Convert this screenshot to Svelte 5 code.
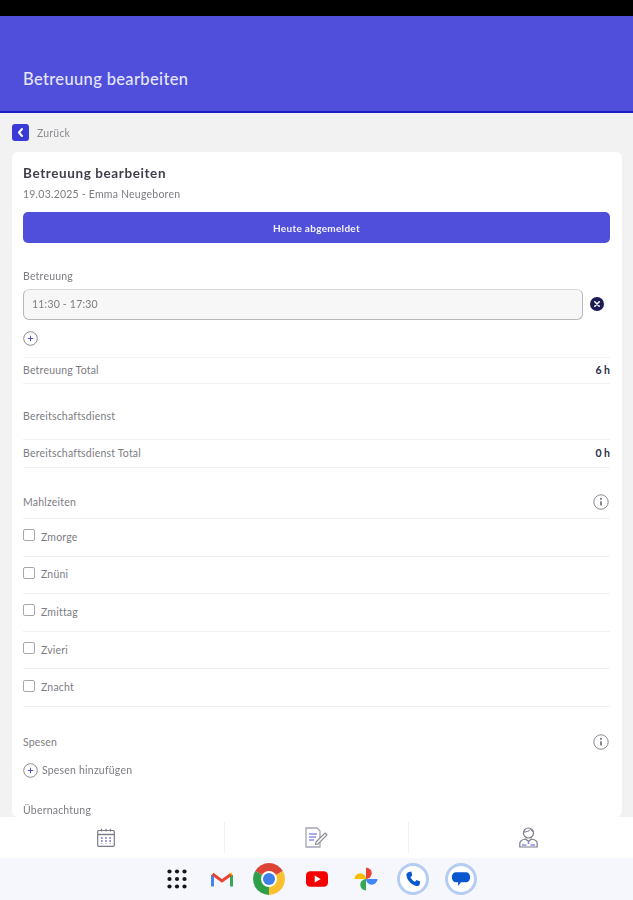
<script>
  const meals = ['Zmorge', 'Znüni', 'Zmittag', 'Zvieri', 'Znacht'];
</script>

<div class="page">
  <div class="statusbar"></div>
  <header class="appbar"><h1>Betreuung bearbeiten</h1></header>

  <main class="content">
    <div class="back">
      <span class="backicon">
        <svg width="17" height="17" viewBox="0 0 17 17"><path d="M10 5 L7 8.5 L10 12" fill="none" stroke="#fff" stroke-width="2" stroke-linecap="round" stroke-linejoin="round"/></svg>
      </span>
      <span>Zurück</span>
    </div>

    <section class="card">
      <h2>Betreuung bearbeiten</h2>
      <p class="sub">19.03.2025 - Emma Neugeboren</p>
      <button class="primary">Heute abgemeldet</button>

      <div class="label first">Betreuung</div>
      <div class="inputrow">
        <div class="input">11:30 - 17:30</div>
        <svg class="remove" width="14" height="14" viewBox="0 0 14 14"><circle cx="7" cy="7" r="7" fill="#1b1b56"/><path d="M4.8 4.8 L9.2 9.2 M9.2 4.8 L4.8 9.2" stroke="#fff" stroke-width="1.6" stroke-linecap="round"/></svg>
      </div>
      <div class="addonly">
        <svg width="15" height="15" viewBox="0 0 15 15"><circle cx="7.5" cy="7.5" r="6.8" fill="none" stroke="#8a8a94" stroke-width="1"/><path d="M7.5 4.8 V10.2 M4.8 7.5 H10.2" stroke="#4f4fdb" stroke-width="1"/></svg>
      </div>

      <div class="total"><span>Betreuung Total</span><b>6 h</b></div>

      <div class="label standby">Bereitschaftsdienst</div>
      <div class="total tall"><span>Bereitschaftsdienst Total</span><b>0 h</b></div>

      <div class="heading meals-head">
        <span>Mahlzeiten</span>
        <svg width="16" height="16" viewBox="0 0 16 16"><circle cx="8" cy="8" r="7.2" fill="none" stroke="#8a8a90" stroke-width="1"/><path d="M8 7.2 V11.5" stroke="#55555c" stroke-width="1.4"/><circle cx="8" cy="4.9" r="0.9" fill="#55555c"/></svg>
      </div>
      {#each meals as meal}
        <label class="meal"><span class="box"></span><span>{meal}</span></label>
      {/each}

      <div class="heading spesen">
        <span>Spesen</span>
        <svg width="16" height="16" viewBox="0 0 16 16"><circle cx="8" cy="8" r="7.2" fill="none" stroke="#8a8a90" stroke-width="1"/><path d="M8 7.2 V11.5" stroke="#55555c" stroke-width="1.4"/><circle cx="8" cy="4.9" r="0.9" fill="#55555c"/></svg>
      </div>
      <div class="addrow">
        <svg width="15" height="15" viewBox="0 0 15 15"><circle cx="7.5" cy="7.5" r="6.8" fill="none" stroke="#8a8a94" stroke-width="1"/><path d="M7.5 4.8 V10.2 M4.8 7.5 H10.2" stroke="#4f4fdb" stroke-width="1"/></svg>
        <span>Spesen hinzufügen</span>
      </div>
      <div class="label overnight">Übernachtung</div>
    </section>
  </main>

  <nav class="tabs">
    <div class="tab">
      <svg width="18" height="19" viewBox="0 0 18 19" fill="none"><rect x="0.7" y="2.5" width="16.6" height="15.8" rx="1" stroke="#7a7a8a" stroke-width="1.2"/><path d="M0.7 6.5 H17.3" stroke="#7a7a8a" stroke-width="1.4"/><path d="M4.5 0.8 V3.5 M9 0.8 V3.5 M13.5 0.8 V3.5" stroke="#7a7a8a" stroke-width="1.2"/><path d="M4.8 9 V15.5 M9 9 V15.5 M13.2 9 V15.5" stroke="#8a8ae6" stroke-width="1.6" stroke-dasharray="2 1"/></svg>
    </div>
    <div class="tab">
      <svg width="23" height="21" viewBox="0 0 23 21" fill="none"><path d="M1 1 H12 L15 4 V20 H1 Z" stroke="#a5a5b2" stroke-width="1.3"/><path d="M4 7 H12 M4 10 H11 M4 13 H9" stroke="#a9a9ec" stroke-width="1.8"/><path d="M11 15 L20 6 L22 8 L13 17 L10.5 17.5 Z" fill="#fff" stroke="#8a8a9a" stroke-width="1.1"/></svg>
    </div>
    <div class="tab">
      <svg width="19" height="21" viewBox="0 0 19 21" fill="none"><circle cx="9.5" cy="6" r="5" stroke="#7a7a8a" stroke-width="1.2"/><path d="M5 5 C7.5 5 10.5 4 11.5 2.5 C12.5 4 13.5 4.5 14.3 5" stroke="#7a7a8a" stroke-width="1"/><path d="M0.8 20 V16.5 C0.8 14 3.5 12.5 6.5 12 L9.5 14.5 L12.5 12 C15.5 12.5 18.2 14 18.2 16.5 V20 Z" stroke="#7a7a8a" stroke-width="1.2"/><path d="M3 18 H7.5 M11.5 18 H16 M9.5 15 V17" stroke="#8a8ae6" stroke-width="1.6"/></svg>
    </div>
  </nav>

  <footer class="dock">
    <svg class="grid" width="20" height="20" viewBox="0 0 20 20" fill="#16161a">
      {#each [2.5, 10, 17.5] as y}
        {#each [2.5, 10, 17.5] as x}<circle cx={x} cy={y} r="2.1" />{/each}
      {/each}
    </svg>
    <span class="appicon">
      <svg width="22" height="17" viewBox="0 0 22 17" fill="none">
        <path d="M1.5 15.5 V4" stroke="#4285f4" stroke-width="3"/>
        <path d="M20.5 15.5 V4" stroke="#34a853" stroke-width="3"/>
        <path d="M1.5 3 L11 10 L20.5 3" stroke="#ea4335" stroke-width="3"/>
        <path d="M19 2.2 L20.5 1.5 L21.6 3 L20 4.5 Z" fill="#fbbc04"/>
      </svg>
    </span>
    <svg class="chrome" width="32" height="32" viewBox="0 0 32 32">
      <path d="M16 16 L2.2 8 A16 16 0 0 1 29.8 8 Z" fill="#db4437"/>
      <path d="M16 16 L29.8 8 A16 16 0 0 1 16 32 Z" fill="#fbc02d"/>
      <path d="M16 16 L16 32 A16 16 0 0 1 2.2 8 Z" fill="#2e9e48"/>
      <circle cx="16" cy="16" r="8" fill="#fff"/>
      <circle cx="16" cy="16" r="6" fill="#3f7fe8"/>
    </svg>
    <svg class="yt" width="22" height="16" viewBox="0 0 24 17"><rect width="24" height="17" rx="4.5" fill="#f40000"/><path d="M9.5 4.8 L16 8.5 L9.5 12.2 Z" fill="#fff"/></svg>
    <span class="appicon">
      <svg width="24" height="24" viewBox="0 0 24 24">
        <path d="M12 12 V0.5 A5.75 5.75 0 0 1 12 12 Z" fill="#ea4335"/>
        <path d="M12 12 V0.5 A5.75 5.75 0 0 1 12 12 Z" transform="rotate(90 12 12)" fill="#4285f4"/>
        <path d="M12 12 V0.5 A5.75 5.75 0 0 1 12 12 Z" transform="rotate(180 12 12)" fill="#34a853"/>
        <path d="M12 12 V0.5 A5.75 5.75 0 0 1 12 12 Z" transform="rotate(270 12 12)" fill="#fbbc04"/>
      </svg>
    </span>
    <span class="ring">
      <svg width="18" height="18" viewBox="0 0 24 24"><path d="M6.6 2.5 L9.8 2 L11 7.5 L8.6 9.3 C9.6 12 11.8 14.6 14.6 15.6 L16.6 13.4 L21.6 15.2 L21 18.6 C20.6 20.6 18.8 21.8 16.8 21.4 C9.8 20 4 13.6 3.2 7 C3 5 4.4 3 6.6 2.5 Z" fill="#0b57d0"/></svg>
    </span>
    <span class="ring">
      <svg width="20" height="20" viewBox="0 0 24 24"><path d="M6 4 H18 C21 4 23 6.5 23 10 C23 13.5 21 16 18 16 H12 L8.5 20.5 V16 H6 C3 16 1 13.5 1 10 C1 6.5 3 4 6 4 Z" fill="#0b57d0"/></svg>
    </span>
  </footer>
</div>

<style>
  :global(body) { margin: 0; background: #f2f2f2; }
  .page {
    width: 633px; height: 900px; overflow: hidden;
    display: flex; flex-direction: column;
    font-family: Lato, "Open Sans", sans-serif;
    color: #7c7c82; font-size: 10.5px; letter-spacing: 0.2px;
    filter: blur(0.4px);
  }
  .statusbar { height: 16px; background: #000; flex: none; }
  .appbar {
    height: 95px; flex: none;
    background: #4f4fdb; border-bottom: 2px solid #1c1cc4;
    display: flex; align-items: flex-end;
  }
  h1 {
    margin: 0 0 22px 23px; font-size: 16.5px; line-height: 20px;
    font-weight: 500; color: #e6e6fb; letter-spacing: 0.35px;
  }
  .content { flex: 1; min-height: 0; overflow: hidden; padding: 0 11px 0 12px; }
  .back { height: 39px; display: flex; align-items: center; gap: 8px; color: #8a8a90; }
  .backicon { width: 17px; height: 17px; border-radius: 3px; background: #3a3ad6; display: block; }
  .backicon svg { display: block; }
  .card { background: #fff; border-radius: 6px; padding: 13px 12px 0 11px; }
  h2 { margin: 0; font-size: 13.5px; line-height: 17px; font-weight: 700; color: #3f3f4c; letter-spacing: 0.6px; }
  .sub { margin: 5px 0 0; line-height: 14px; font-size: 10.5px; letter-spacing: 0.22px; color: #7c7c82; }
  .primary {
    display: block; width: 100%; height: 31px; margin-top: 11px;
    background: #4f4fdb; color: #f4f4ff; border: 0; border-radius: 5px;
    font: 700 10px Lato, sans-serif; letter-spacing: 0.3px;
  }
  .label { line-height: 14px; }
  .first { margin-top: 26px; }
  .inputrow { display: flex; align-items: center; gap: 7px; margin-top: 6px; }
  .input {
    flex: 1; height: 31px; box-sizing: border-box; padding: 0 0 2px 8px;
    display: flex; align-items: center;
    background: #f7f7f7; border: 1px solid #b8b8b8; border-top-color: #d8d8d8; border-radius: 6px;
  }
  .remove { flex: none; margin: 0 6px 1px 0; }
  .addonly { height: 15px; margin-top: 11px; margin-bottom: 11px; }
  .addonly svg { display: block; }
  .total {
    height: 27px; display: flex; align-items: center; justify-content: space-between;
    border-top: 1px solid #f2f2f2; border-bottom: 1px solid #f2f2f2; box-sizing: border-box;
    padding-bottom: 2px;
  }
  .total.tall { height: 29px; }
  .total b { color: #2c2c48; font-weight: 700; letter-spacing: 0; }
  .standby { margin-top: 25px; margin-bottom: 16px; }
  .heading { display: flex; align-items: center; justify-content: space-between; }
  .heading svg { margin-right: 1px; }
  .meals-head { margin-top: 23px; height: 21px; padding-bottom: 6px; border-bottom: 1px solid #f0f0f0; }
  .meal {
    height: 37.6px; display: flex; align-items: center; gap: 6px;
    border-bottom: 1px solid #f0f0f0; box-sizing: border-box; padding-bottom: 1px;
  }
  .box { width: 10px; height: 10px; border: 1px solid #a8a8a8; border-radius: 2px; margin-bottom: 3px; }
  .spesen { margin-top: 26px; height: 18px; }
  .addrow { display: flex; align-items: center; gap: 4px; margin-top: 12px; height: 15px; }
  .overnight { margin-top: 25px; }
  .tabs {
    height: 41px; flex: none; background: #fff;
    display: grid; grid-template-columns: 225px 184px 1fr;
  }
  .tab { display: flex; align-items: center; justify-content: center; border-right: 1px solid #f2f2f2; margin: 5px 0; }
  .tab:nth-child(1) { padding-right: 12px; }
  .tab:nth-child(3) { border: 0; padding-left: 14px; }
  .dock {
    height: 42px; flex: none; background: #f6f7fd;
    display: flex; align-items: center; padding-left: 167px; box-sizing: border-box;
  }
  .dock > * { flex: none; }
  .appicon { width: 24px; height: 24px; display: flex; align-items: center; justify-content: center; margin-left: 22.5px; }
  .chrome { margin-left: 19px; }
  .yt { margin-left: 21.5px; }
  .dock .appicon:nth-of-type(2) { margin-left: 25.5px; }
  .ring {
    width: 32px; height: 32px; box-sizing: border-box; border-radius: 50%;
    border: 3px solid #b5cdf2; background: #fff;
    display: flex; align-items: center; justify-content: center; margin-left: 16px;
  }
  .dock .appicon + .ring { margin-left: 19.5px; }
</style>
